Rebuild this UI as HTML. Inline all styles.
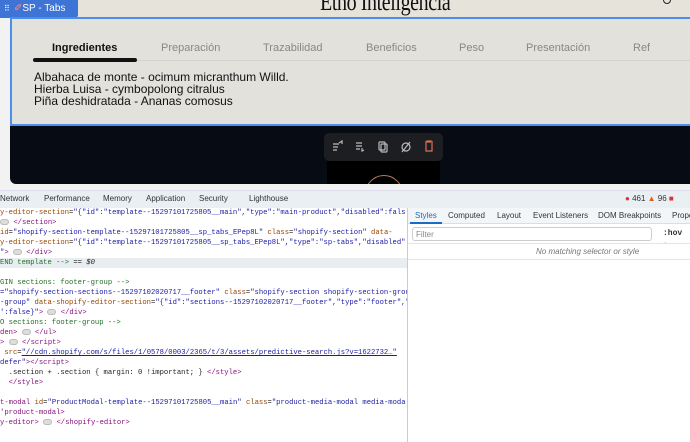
<!DOCTYPE html>
<html><head><meta charset="utf-8"><style>
*{margin:0;padding:0;box-sizing:border-box}
body{width:690px;height:442px;overflow:hidden;background:#fff;font-family:"Liberation Sans",sans-serif;position:relative}
.abs{position:absolute}
.mono{font-family:"Liberation Mono",monospace;font-size:7.2px;white-space:pre;color:#222}
.at{color:#994500}.v{color:#1a1aa6}.t{color:#881280}.c{color:#236e25}
.dots{display:inline-block;width:9px;height:6px;border-radius:3px;background:#ddd;border:1px solid #bbb;vertical-align:middle}
</style></head><body>
<div class="abs" style="left:0;top:0;width:690px;height:190px;background:#f2f2f2"></div>
<div class="abs" style="left:10px;top:0;width:680px;height:184px;background:#060b14;border-radius:0 0 0 6px"></div>
<div class="abs" style="left:10px;top:0;width:680px;height:18px;background:#e6e3da;overflow:hidden">
  <div class="abs" style="left:310px;top:-11px;font-family:'Liberation Serif',serif;font-size:25px;color:#111;letter-spacing:-0.5px;transform:scaleX(0.8);transform-origin:left top;white-space:nowrap">Etho Inteligencia</div>
  <div class="abs" style="left:653px;top:-4px;width:8px;height:8px;border:1.5px solid #222;border-radius:50%"></div>
</div>
<div class="abs" style="left:0;top:0;width:78px;height:18px;background:#3d74d6;border-radius:0 0 3px 0;color:#fff;font-size:10px;line-height:17px;padding-left:14px;white-space:nowrap"><span style="position:absolute;left:4px;top:0;font-size:8px">⠿</span><span style="color:#f88">✐</span>SP - Tabs</div>
<div class="abs" style="left:10px;top:17px;width:680px;height:109px;background:#e2e1dc;border:2px solid #4a8ef0;border-right:none"></div>
<div class="abs" style="top:42px;left:0;width:690px;font-size:11px;color:#888;white-space:nowrap">
  <span class="abs" style="left:52px;color:#111;font-weight:bold">Ingredientes</span>
  <span class="abs" style="left:161px">Preparación</span>
  <span class="abs" style="left:263px">Trazabilidad</span>
  <span class="abs" style="left:366px">Beneficios</span>
  <span class="abs" style="left:459px">Peso</span>
  <span class="abs" style="left:526px">Presentación</span>
  <span class="abs" style="left:633px">Ref</span>
</div>
<div class="abs" style="left:33px;top:58px;width:104px;height:4px;background:#111;border-radius:2px"></div>
<div class="abs" style="left:137px;top:60px;width:553px;height:1px;background:#d4d3ce"></div>
<div class="abs" style="left:34px;top:71px;font-size:12px;line-height:12px;color:#111;white-space:nowrap">Albahaca de monte - ocimum micranthum Willd.<br>Hierba Luisa - cymbopolong citralus<br>Piña deshidratada - Ananas comosus</div>
<div class="abs" style="left:327px;top:160px;width:113px;height:24px;background:#000;overflow:hidden"><div class="abs" style="left:38px;top:15px;width:38px;height:38px;border:1px solid #b07a60;border-radius:50%"></div></div>
<div class="abs" style="left:324px;top:133px;width:119px;height:28px;background:#1d1e21;border-radius:5px">
  <svg width="119" height="28" fill="none" stroke="#bbb" stroke-width="1.2">
    <path d="M9 11h6M9 14h5M9 17h4M15 10l3-2 0 3"/>
    <path d="M32 10h6M32 13h6M32 16h4M38 15v3l2-1"/>
    <rect x="55" y="9" width="6" height="8" rx="1"/><rect x="57" y="11" width="6" height="8" rx="1"/>
    <circle cx="82" cy="14" r="4"/><path d="M78 19l8-10"/>
    <path d="M101 9h8M103 9v-1h4v1M102 10v8h6v-8" stroke="#e07050"/>
  </svg>
</div>
<div class="abs" style="left:0;top:190px;width:690px;height:18px;background:#e9eff3;border-top:1px solid #dde"></div>
<div class="abs" style="top:194px;font-size:8px;color:#333;white-space:nowrap">
  <span class="abs" style="left:0">Network</span><span class="abs" style="left:44px">Performance</span><span class="abs" style="left:103px">Memory</span><span class="abs" style="left:146px">Application</span><span class="abs" style="left:199px">Security</span><span class="abs" style="left:249px">Lighthouse</span>
</div>
<div class="abs" style="left:625px;top:194px;font-size:8px;color:#333;white-space:nowrap"><span style="color:#d33">●</span> 461 <span style="color:#e06010">▲</span> 96 <span style="color:#d33">■</span></div>
<div class="abs" style="left:407px;top:208px;width:1px;height:234px;background:#ccc"></div>
<div class="abs" style="left:408px;top:208px;width:282px;height:16px;background:#f3f6f8;border-bottom:1px solid #ddd"></div>
<div class="abs" style="top:211px;font-size:8px;color:#333;white-space:nowrap">
  <span class="abs" style="left:415px;color:#1a6dc2">Styles</span><span class="abs" style="left:448px">Computed</span><span class="abs" style="left:497px">Layout</span><span class="abs" style="left:533px">Event Listeners</span><span class="abs" style="left:598px">DOM Breakpoints</span><span class="abs" style="left:672px">Prope</span>
</div>
<div class="abs" style="left:410px;top:222px;width:32px;height:2px;background:#1a6dc2"></div>
<div class="abs" style="left:412px;top:227px;width:240px;height:14px;border:1px solid #ccc;border-radius:3px;font-size:8px;color:#888;padding:2px 3px">Filter</div>
<div class="abs" style="left:663px;top:229px;font-family:'Liberation Mono',monospace;font-size:8px;font-weight:bold;color:#333">:hov .</div>
<div class="abs" style="left:408px;top:243px;width:282px;height:1px;background:#e4e4e4"></div>
<div class="abs" style="left:536px;top:247px;font-size:8px;font-style:italic;color:#777;white-space:nowrap">No matching selector or style</div>
<div class="abs" style="left:408px;top:259px;width:282px;height:1px;background:#e4e4e4"></div>
<div class="abs" style="left:0;top:208px;width:407px;height:234px;overflow:hidden">
<div class="abs" style="left:0;top:50px;width:407px;height:10px;background:#e8edf1"></div>
<div class="abs mono" style="left:0;top:0;line-height:10px"><span class="at">y-editor-section</span>=<span class="v">"{"id":"template--15297101725805__main","type":"main-product","disabled":fals</span>
<span class="dots"></span><span class="t"> &lt;/section&gt;</span>
<span class="at">id</span>=<span class="v">"shopify-section-template--15297101725805__sp_tabs_EPep8L"</span> <span class="at">class</span>=<span class="v">"shopify-section"</span> <span class="at">data-</span>
<span class="at">y-editor-section</span>=<span class="v">"{"id":"template--15297101725805__sp_tabs_EPep8L","type":"sp-tabs","disabled":</span>
<span class="v">"</span><span class="t">&gt; </span><span class="dots"></span><span class="t"> &lt;/div&gt;</span>
<span class="c">END template --&gt;</span> == <i>$0</i>

<span class="c">GIN sections: footer-group --&gt;</span>
<span class="v">="shopify-section-sections--15297102020717__footer"</span> <span class="at">class</span>=<span class="v">"shopify-section shopify-section-group</span>
<span class="v">-group"</span> <span class="at">data-shopify-editor-section</span>=<span class="v">"{"id":"sections--15297102020717__footer","type":"footer","d</span>
<span class="v">':false}"</span><span class="t">&gt; </span><span class="dots"></span><span class="t"> &lt;/div&gt;</span>
<span class="c">O sections: footer-group --&gt;</span>
<span class="t">den&gt; </span><span class="dots"></span><span class="t"> &lt;/ul&gt;</span>
<span class="t">&gt; </span><span class="dots"></span><span class="t"> &lt;/script&gt;</span>
 <span class="at">src</span>=<span class="v" style="text-decoration:underline">"//cdn.shopify.com/s/files/1/0578/0003/2365/t/3/assets/predictive-search.js?v=1622732…"</span>
<span class="v">defer"</span><span class="t">&gt;&lt;/script&gt;</span>
  .section + .section { margin: 0 !important; } <span class="t">&lt;/style&gt;</span>
  <span class="t">&lt;/style&gt;</span>

<span class="t">t-modal</span> <span class="at">id</span>=<span class="v">"ProductModal-template--15297101725805__main"</span> <span class="at">class</span>=<span class="v">"product-media-modal media-moda</span>
<span class="t">'product-modal&gt;</span>
<span class="t">y-editor&gt; </span><span class="dots"></span><span class="t"> &lt;/shopify-editor&gt;</span></div>
</div>
</body></html>
